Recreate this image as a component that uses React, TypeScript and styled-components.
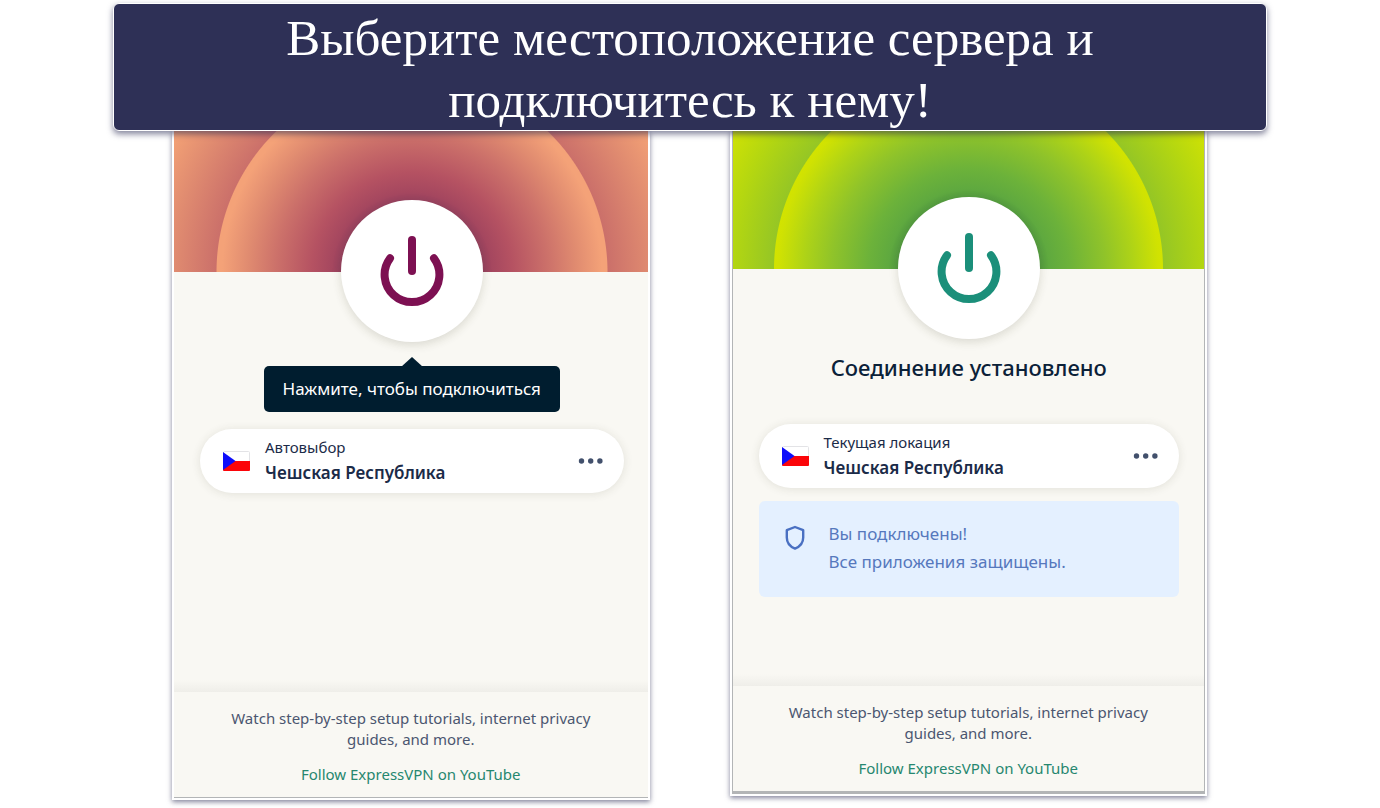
import React from "react";
import styled, { createGlobalStyle, css } from "styled-components";

const GlobalStyle = createGlobalStyle`
  *, *::before, *::after { box-sizing: border-box; }
  body {
    margin: 0;
    background: #ffffff;
    font-family: "Noto Sans", "Open Sans", sans-serif;
    color: #1b2b48;
  }
  h1, h2, p { margin: 0; font-weight: 400; }
  button { font: inherit; color: inherit; border: 0; padding: 0; background: none; cursor: pointer; }
`;

type Tone = "off" | "on";

const heroes = {
  off: css`
    background: radial-gradient(circle at calc(50% + 1px) 100%,
      #8e3e5f 66px, #a5475f 80px, #b55262 100px, #cc716a 136px, #e08b70 164px, #f4a278 190px,
      #f4a278 195px, #cb706a 196px, #e08b70 238px, #f2a075 272px);
  `,
  on: css`
    background: radial-gradient(circle at 50% 100%,
      #4d9440 66px, #5fa93f 80px, #6cb23a 100px, #8fc32a 136px, #aed317 164px, #d0e202 190px,
      #d2e300 194px, #95c625 195px, #b5d710 238px, #cfe204 272px);
  `,
};

const Page = styled.div`
  min-width: 1080px;
  padding-top: 3px;
`;

const Banner = styled.header`
  position: relative;
  z-index: 1;
  margin: 0 113px;
  padding: 3px 120px 0;
  height: 128px;
  border: 1px solid #ffffff;
  border-radius: 6px;
  background: #2e3056;
  box-shadow: 0 3px 6px rgba(46, 48, 86, 0.6);
`;

const BannerTitle = styled.h1`
  font-family: "Liberation Serif", serif;
  font-size: 51px;
  line-height: 62px;
  color: #ffffff;
  text-align: center;
`;

const Panels = styled.main`
  display: grid;
  grid-template-columns: 1fr 1fr;
  align-items: start;
  gap: 80px;
  padding: 0 173px 8px 172px;
`;

const Panel = styled.section`
  display: flex;
  flex-direction: column;
  border: 2px solid #ffffff;
  border-top: 0;
  background: #f9f8f3;
  box-shadow: 0 2px 5px rgba(46, 48, 86, 0.6);
`;

const Frame = styled.div<{ $tone: Tone }>`
  border: solid #b3b5b6;
  border-width: ${(p) => (p.$tone === "on" ? "0 1px 3px" : "0 0 1px")};
`;

const Hero = styled.div<{ $tone: Tone }>`
  height: ${(p) => (p.$tone === "on" ? 138 : 141)}px;
  ${(p) => heroes[p.$tone]}
`;

const Body = styled.div<{ $tone: Tone }>`
  display: flex;
  flex-direction: column;
  align-items: center;
  min-height: ${(p) => (p.$tone === "on" ? 417 : 420)}px;
  padding: 0 ${(p) => (p.$tone === "on" ? 25 : 24)}px 24px 26px;
  background: linear-gradient(to top, #efeee9, #f9f8f3 12px);
`;

const PowerButton = styled.button<{ $tone: Tone }>`
  display: grid;
  place-items: center;
  flex: none;
  width: 142px;
  height: 142px;
  margin-top: -72px;
  border-radius: 50%;
  background: #ffffff;
  color: ${(p) => (p.$tone === "on" ? "#1b8f7a" : "#7d1052")};
  box-shadow: 0 3px 10px rgba(60, 60, 30, 0.16);
`;

const Tooltip = styled.div`
  position: relative;
  margin-top: 24px;
  padding: 0 19px;
  border-radius: 5px;
  background: #001d2f;
  color: #ffffff;
  font-size: 17px;
  line-height: 46px;

  &::before {
    content: "";
    position: absolute;
    top: -9px;
    left: calc(50% - 11px);
    border: solid transparent;
    border-width: 0 11px 10px;
    border-bottom-color: #001d2f;
  }
`;

const Status = styled.h2`
  margin-top: 14px;
  font-size: 22px;
  font-weight: 500;
  line-height: 28px;
  color: #0b2138;
`;

const Location = styled.div<{ $tone: Tone }>`
  display: flex;
  align-items: center;
  align-self: stretch;
  height: 64px;
  margin-top: ${(p) => (p.$tone === "on" ? 43 : 17)}px;
  padding: 0 20px 0 23px;
  border-radius: 32px;
  background: #ffffff;
  box-shadow: 0 1px 10px rgba(60, 60, 30, 0.12);
`;

const LocationText = styled.div`
  flex: 1;
  margin-left: 15px;
`;

const LocationLabel = styled.p`
  margin-bottom: 2px;
  font-size: 15px;
  line-height: 22px;
`;

const LocationName = styled.p`
  font-size: 17px;
  font-weight: 600;
  line-height: 26px;
`;

const MoreButton = styled.button`
  display: flex;
`;

const Notice = styled.div`
  display: flex;
  align-self: stretch;
  gap: 22px;
  margin-top: 13px;
  padding: 19px 24px 21px;
  border-radius: 6px;
  background: #e4f0ff;
  color: #5678bd;
  font-size: 17px;
  line-height: 28px;
`;

const Footer = styled.footer`
  padding: 16px 50px 12px;
  font-size: 15px;
  line-height: 21px;
  text-align: center;
  color: #4b5670;
`;

const FooterText = styled.p`
  max-width: 370px;
  margin: 0 auto 14px;
`;

const FooterLink = styled.a`
  color: #26876f;
  text-decoration: none;
`;

const PowerIcon = () => (
  <svg width="64" height="72" viewBox="0 0 64 72" fill="none" stroke="currentColor" strokeWidth="8" strokeLinecap="round" aria-hidden="true">
    <path d="M32 5V36" />
    <path d="M10 23.3A27.4 27.4 0 1 0 54 23.3" />
  </svg>
);

const CzechFlag = () => (
  <svg width="27" height="20" viewBox="0 0 27 20" aria-hidden="true">
    <rect x="0.5" y="0.5" width="26" height="19" rx="1" fill="#ffffff" stroke="#e3e3e6" />
    <path d="M0 10H27V19a1 1 0 0 1-1 1H1a1 1 0 0 1-1-1Z" fill="#fb0509" />
    <path d="M0 1L12.5 10L0 19Z" fill="#0d0dfa" />
  </svg>
);

const MoreIcon = () => (
  <svg width="26" height="6" viewBox="0 0 26 6" fill="#42506c" aria-hidden="true">
    <circle cx="3.5" cy="3" r="2.7" />
    <circle cx="12.7" cy="3" r="2.7" />
    <circle cx="21.9" cy="3" r="2.7" />
  </svg>
);

const ShieldIcon = () => (
  <svg width="24" height="34" viewBox="0 0 24 34" fill="none" stroke="#4a70c2" strokeWidth="2.4" strokeLinejoin="round" aria-hidden="true">
    <path d="M12 7L20.2 10.2V17.5C20.2 22.3 17 26.6 12 28.6C7 26.6 3.8 22.3 3.8 17.5V10.2Z" />
  </svg>
);

interface VpnPanelProps {
  tone: Tone;
  label: string;
  action: string;
  status: React.ReactNode;
  children?: React.ReactNode;
}

const VpnPanel = ({ tone, label, action, status, children }: VpnPanelProps) => (
  <Panel>
    <Frame $tone={tone}>
      <Hero $tone={tone} />
      <Body $tone={tone}>
        <PowerButton $tone={tone} type="button" aria-label={action}>
          <PowerIcon />
        </PowerButton>
        {status}
        <Location $tone={tone}>
          <CzechFlag />
          <LocationText>
            <LocationLabel>{label}</LocationLabel>
            <LocationName>Чешская Республика</LocationName>
          </LocationText>
          <MoreButton type="button" aria-label="Выбрать локацию">
            <MoreIcon />
          </MoreButton>
        </Location>
        {children}
      </Body>
      <Footer>
        <FooterText>Watch step-by-step setup tutorials, internet privacy guides, and more.</FooterText>
        <FooterLink href="#youtube">Follow ExpressVPN on YouTube</FooterLink>
      </Footer>
    </Frame>
  </Panel>
);

export default function App() {
  return (
    <Page>
      <GlobalStyle />
      <Banner>
        <BannerTitle>Выберите местоположение сервера и подключитесь к нему!</BannerTitle>
      </Banner>
      <Panels>
        <VpnPanel
          tone="off"
          label="Автовыбор"
          action="Подключиться"
          status={<Tooltip role="tooltip">Нажмите, чтобы подключиться</Tooltip>}
        />
        <VpnPanel
          tone="on"
          label="Текущая локация"
          action="Отключиться"
          status={<Status>Соединение установлено</Status>}
        >
          <Notice role="status">
            <ShieldIcon />
            <p>
              Вы подключены!
              <br />
              Все приложения защищены.
            </p>
          </Notice>
        </VpnPanel>
      </Panels>
    </Page>
  );
}
